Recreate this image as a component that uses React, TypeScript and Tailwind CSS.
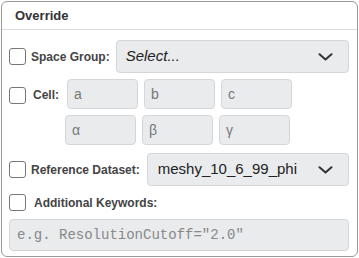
import React from "react";

const Check = ({ className = "" }: { className?: string }) => (
  <div className={"w-[17px] h-[17px] shrink-0 rounded-[3px] border border-[#777] bg-white " + className} />
);

const Chevron = () => (
  <svg width="15" height="8" viewBox="0 0 15 8" className="shrink-0">
    <path d="M1.5 1.2 L7.5 6.5 L13.5 1.2" fill="none" stroke="#333" strokeWidth="2" strokeLinecap="round" strokeLinejoin="round" />
  </svg>
);

const Cell = ({ p }: { p: string }) => (
  <div className="w-[71px] h-[30px] rounded-[4px] border border-[#d4d7da] bg-[#e9ebed] flex items-center pl-[6px] text-[14px] text-[#777]">
    {p}
  </div>
);

export default function App() {
  return (
    <div className="w-[359px] h-[258px] bg-white" style={{ fontFamily: '"Liberation Sans", Arial, sans-serif' }}>
      <div className="ml-[1px] mt-[1px] w-[357px] h-[256px] rounded-[6px] border border-[#9a9a9a] bg-white flex flex-col overflow-hidden">
        <div className="h-[28px] shrink-0 border-b border-[#dcdcdc] flex items-center pl-[13px] text-[13px] font-bold text-[#333]">
          Override
        </div>
        <div className="flex flex-col pl-[7px] pr-[8px]">
          {/* Row 1 */}
          <div className="mt-[10px] h-[33px] flex items-center">
            <Check />
            <span className="ml-[5px] text-[12px] font-bold text-[#444]">Space Group:</span>
            <div className="ml-[6px] flex-1 h-[33px] rounded-[4px] border border-[#d4d7da] bg-[#e9ebed] flex items-center justify-between pl-[9px] pr-[15px]">
              <span className="text-[15px] italic text-[#222]">Select...</span>
              <Chevron />
            </div>
          </div>
          {/* Row 2 */}
          <div className="mt-[6px] flex">
            <div className="flex items-start pt-[8px]">
              <Check />
              <span className="ml-[7px] text-[12px] font-bold text-[#444] leading-[15px] mt-[1px]">Cell:</span>
            </div>
            <div className="ml-[8px] flex flex-col gap-[6px]">
              <div className="flex gap-[6px]">
                <Cell p="a" />
                <Cell p="b" />
                <Cell p="c" />
              </div>
              <div className="flex gap-[6px] ml-[-2px]">
                <Cell p="α" />
                <Cell p="β" />
                <Cell p="γ" />
              </div>
            </div>
          </div>
          {/* Row 3 */}
          <div className="mt-[8px] h-[33px] flex items-center">
            <Check />
            <span className="ml-[5px] text-[12px] font-bold text-[#444]">Reference Dataset:</span>
            <div className="ml-[7px] flex-1 h-[33px] rounded-[4px] border border-[#d4d7da] bg-[#e9ebed] flex items-center justify-between pl-[10px] pr-[15px]">
              <span className="text-[15px] text-[#222]">meshy_10_6_99_phi</span>
              <Chevron />
            </div>
          </div>
          {/* Row 4 */}
          <div className="mt-[8px] h-[17px] flex items-center">
            <Check />
            <span className="ml-[8px] text-[12px] font-bold text-[#444]">Additional Keywords:</span>
          </div>
          <div className="mt-[8px] h-[32px] rounded-[4px] border border-[#d4d7da] bg-[#e9ebed] flex items-center pl-[7px] text-[14px] text-[#888]" style={{ fontFamily: '"Liberation Mono", "Courier New", monospace' }}>
            e.g. ResolutionCutoff="2.0"
          </div>
        </div>
      </div>
    </div>
  );
}
